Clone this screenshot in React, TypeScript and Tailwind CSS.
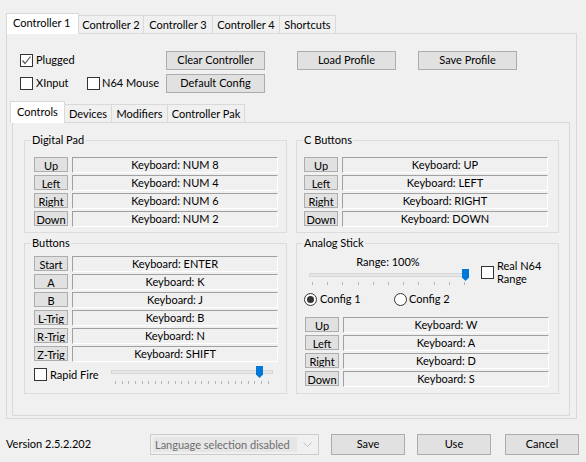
import React from 'react';

type Row = { label: string; value: string };

const digitalPad: Row[] = [
  { label: 'Up', value: 'Keyboard: NUM 8' },
  { label: 'Left', value: 'Keyboard: NUM 4' },
  { label: 'Right', value: 'Keyboard: NUM 6' },
  { label: 'Down', value: 'Keyboard: NUM 2' },
];

const cButtons: Row[] = [
  { label: 'Up', value: 'Keyboard: UP' },
  { label: 'Left', value: 'Keyboard: LEFT' },
  { label: 'Right', value: 'Keyboard: RIGHT' },
  { label: 'Down', value: 'Keyboard: DOWN' },
];

const buttons: Row[] = [
  { label: 'Start', value: 'Keyboard: ENTER' },
  { label: 'A', value: 'Keyboard: K' },
  { label: 'B', value: 'Keyboard: J' },
  { label: 'L-Trig', value: 'Keyboard: B' },
  { label: 'R-Trig', value: 'Keyboard: N' },
  { label: 'Z-Trig', value: 'Keyboard: SHIFT' },
];

const analog: Row[] = [
  { label: 'Up', value: 'Keyboard: W' },
  { label: 'Left', value: 'Keyboard: A' },
  { label: 'Right', value: 'Keyboard: D' },
  { label: 'Down', value: 'Keyboard: S' },
];

function Checkbox({ checked }: { checked?: boolean }) {
  return (
    <div className="w-[13px] h-[13px] shrink-0 border border-[#333333] bg-white flex items-center justify-center">
      {checked && (
        <svg width="11" height="11" viewBox="0 0 11 11">
          <path d="M1.5 5.5L4 8.5L9.5 1.5" fill="none" stroke="#5a5a5a" strokeWidth="1.2" />
        </svg>
      )}
    </div>
  );
}

function Radio({ checked }: { checked?: boolean }) {
  return (
    <div className="w-[13px] h-[13px] shrink-0 rounded-full border border-[#333333] bg-white flex items-center justify-center">
      {checked && <div className="w-[7px] h-[7px] rounded-full bg-[#333333]" />}
    </div>
  );
}

function KeyRow({ row }: { row: Row }) {
  return (
    <div className="flex h-[16px] mb-[2px]">
      <div className="w-[34px] h-[15px] border border-[#adadad] bg-[#e1e1e1] overflow-hidden text-center pt-[1px] leading-[14px]">
        {row.label}
      </div>
      <div className="ml-[4px] w-[206px] h-[16px] border border-t-[#a0a0a0] border-l-[#a0a0a0] border-b-white border-r-white text-center leading-[14px]">
        {row.value}
      </div>
    </div>
  );
}

function Group({ title, className, children }: { title: string; className: string; children: React.ReactNode }) {
  return (
    <div className={`relative border border-[#dcdcdc] ${className}`}>
      <span className="absolute -top-[9px] left-[6px] px-[1px] bg-[#f0f0f0] leading-[16px]">{title}</span>
      {children}
    </div>
  );
}

function Thumb() {
  return (
    <svg width="7" height="12" viewBox="0 0 7 12">
      <path d="M0 0H7V8.5L3.5 12L0 8.5Z" fill="#0078d7" />
    </svg>
  );
}

function Ticks({ count }: { count: number }) {
  return (
    <>
      {Array.from({ length: count }).map((_, i) => (
        <div key={i} className="w-px h-[3px] bg-[#b4b4b4]" />
      ))}
    </>
  );
}

export default function App() {
  return (
    <div className="w-[586px] h-[462px] overflow-hidden whitespace-nowrap bg-[#f0f0f0] text-[11px] text-black font-['Lato','Noto_Sans',sans-serif]">
      <div className="pt-[13px] px-[6px]">
        {/* Controller tabs */}
        <div className="flex items-end h-[20px]">
          <div className="relative z-10 -mb-px w-[73px] h-[21px] bg-white border border-b-0 border-[#d9d9d9] pl-[6px] leading-[18px]">
            Controller 1
          </div>
          <div className="-ml-px w-[66px] h-[18px] border border-b-0 border-[#d9d9d9] text-center leading-[17px]">Controller 2</div>
          <div className="-ml-px w-[70px] h-[18px] border border-b-0 border-[#d9d9d9] text-center leading-[17px]">Controller 3</div>
          <div className="-ml-px w-[68px] h-[18px] border border-b-0 border-[#d9d9d9] text-center leading-[17px]">Controller 4</div>
          <div className="-ml-px w-[57px] h-[18px] border border-b-0 border-[#d9d9d9] text-center leading-[17px]">Shortcuts</div>
        </div>

        <div className="w-[571px] h-[386px] border border-[#d9d9d9]">
          {/* Top controls */}
          <div className="pt-[17px] pl-[13px] flex items-start h-[67px]">
            <div className="w-[146px]">
              <div className="h-[19px] flex items-center">
                <Checkbox checked />
                <span className="ml-[3px]">Plugged</span>
              </div>
              <div className="mt-[4px] h-[19px] flex items-center">
                <div className="w-[67px] flex items-center">
                  <Checkbox />
                  <span className="ml-[3px]">XInput</span>
                </div>
                <Checkbox />
                <span className="ml-[2px]">N64 Mouse</span>
              </div>
            </div>
            <div className="w-[99px]">
              <div className="h-[19px] border border-[#adadad] bg-[#e1e1e1] flex items-center justify-center">Clear Controller</div>
              <div className="mt-[4px] h-[19px] border border-[#adadad] bg-[#e1e1e1] flex items-center justify-center">Default Config</div>
            </div>
            <div className="ml-[32px] w-[99px] h-[19px] border border-[#adadad] bg-[#e1e1e1] flex items-center justify-center">Load Profile</div>
            <div className="ml-[22px] w-[99px] h-[19px] border border-[#adadad] bg-[#e1e1e1] flex items-center justify-center">Save Profile</div>
          </div>

          {/* Inner tabs */}
          <div className="pl-[3px] flex items-end h-[21px]">
            <div className="relative z-10 -mb-px w-[55px] h-[22px] bg-white border border-b-0 border-[#d9d9d9] pl-[6px] leading-[19px]">
              Controls
            </div>
            <div className="-ml-px w-[48px] h-[18px] border border-b-0 border-[#d9d9d9] text-center leading-[17px]">Devices</div>
            <div className="-ml-px w-[57px] h-[18px] border border-b-0 border-[#d9d9d9] text-center leading-[17px]">Modifiers</div>
            <div className="-ml-px w-[78px] h-[18px] border border-b-0 border-[#d9d9d9] text-center leading-[17px]">Controller Pak</div>
          </div>

          <div className="ml-[5px] w-[558px] h-[294px] border border-[#d9d9d9] pt-[17px] pl-[11px]">
            <div className="grid grid-cols-[263px_263px] gap-x-[9px] gap-y-[10px]">
              <Group title="Digital Pad" className="h-[93px] pt-[16px] pl-[9px]">
                {digitalPad.map((r) => (
                  <KeyRow key={r.label} row={r} />
                ))}
              </Group>
              <Group title="C Buttons" className="h-[93px] pt-[16px] pl-[7px]">
                {cButtons.map((r) => (
                  <KeyRow key={r.label} row={r} />
                ))}
              </Group>
              <Group title="Buttons" className="h-[151px] pt-[12px] pl-[9px]">
                {buttons.map((r) => (
                  <KeyRow key={r.label} row={r} />
                ))}
                <div className="mt-[2px] flex items-start">
                  <div className="w-[77px] pt-[4px] flex items-center">
                    <Checkbox />
                    <span className="ml-[3px] leading-[13px]">Rapid Fire</span>
                  </div>
                  <div className="relative w-[162px] h-[22px]">
                    <div className="absolute top-[6px] left-0 right-0 h-[4px] bg-[#e7e7e7] border border-[#d6d6d6]" />
                    <div className="absolute top-[2px] left-[145px] flex">
                      <Thumb />
                    </div>
                    <div className="absolute top-[17px] left-[4px] right-[4px] flex justify-between">
                      <Ticks count={24} />
                    </div>
                  </div>
                </div>
              </Group>
              <Group title="Analog Stick" className="h-[151px] pt-[11px]">
                <div className="flex items-start">
                  <div className="ml-[12px] w-[158px]">
                    <div className="h-[14px] text-center leading-[14px]">Range: 100%</div>
                    <div className="relative h-[18px]">
                      <div className="absolute top-[4px] left-0 right-0 h-[4px] bg-[#e7e7e7] border border-[#d6d6d6]" />
                      <div className="absolute top-0 left-[153px] flex">
                        <Thumb />
                      </div>
                      <div className="absolute top-[13px] left-[3px] right-[2px] flex justify-between">
                        <Ticks count={11} />
                      </div>
                    </div>
                  </div>
                  <div className="ml-[14px] pt-[4px] flex items-center">
                    <Checkbox />
                    <div className="ml-[3px] leading-[13px]">
                      <div>Real N64</div>
                      <div>Range</div>
                    </div>
                  </div>
                </div>
                <div className="mt-[6px] pl-[7px] h-[13px] flex items-center">
                  <div className="w-[90px] flex items-center">
                    <Radio checked />
                    <span className="ml-[3px]">Config 1</span>
                  </div>
                  <Radio />
                  <span className="ml-[2px]">Config 2</span>
                </div>
                <div className="mt-[11px] pl-[8px]">
                  {analog.map((r) => (
                    <KeyRow key={r.label} row={r} />
                  ))}
                </div>
              </Group>
            </div>
          </div>
        </div>
      </div>

      {/* Bottom bar */}
      <div className="mt-[15px] pl-[6px] flex items-center h-[21px]">
        <div className="w-[144px]">Version 2.5.2.202</div>
        <div className="w-[169px] h-[21px] border border-[#cccccc] bg-[#f0f0f0] flex items-center pl-[2px] pr-[6px]">
          <div className="flex-1 h-[15px] bg-[#e6e6e6] text-[#6d6d6d] leading-[15px] pl-[2px]">Language selection disabled</div>
          <svg width="9" height="6" viewBox="0 0 9 6" className="ml-[6px]">
            <path d="M0.5 0.5L4.5 4.5L8.5 0.5" fill="none" stroke="#bfbfbf" strokeWidth="1" />
          </svg>
        </div>
        <div className="ml-[12px] w-[74px] h-[21px] border border-[#adadad] bg-[#e1e1e1] flex items-center justify-center">Save</div>
        <div className="ml-[12px] w-[74px] h-[21px] border border-[#adadad] bg-[#e1e1e1] flex items-center justify-center">Use</div>
        <div className="ml-[14px] w-[74px] h-[21px] border border-[#adadad] bg-[#e1e1e1] flex items-center justify-center">Cancel</div>
      </div>
    </div>
  );
}
